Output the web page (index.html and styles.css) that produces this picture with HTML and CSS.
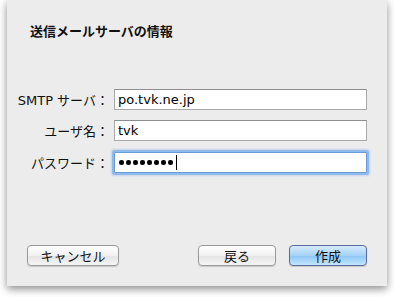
FILE: index.html
```html
<!DOCTYPE html>
<html lang="ja">
<head>
    <meta charset="UTF-8">
    <title>送信メールサーバの情報</title>
    <link rel="stylesheet" href="styles.css">
</head>
<body>
    <div class="sheet">
        <h1 class="title">送信メールサーバの情報</h1>
        <form class="fields">
            <div class="row">
                <label class="row-label">SMTP サーバ：</label>
                <input class="field" type="text" value="po.tvk.ne.jp">
            </div>
            <div class="row">
                <label class="row-label">ユーザ名：</label>
                <input class="field" type="text" value="tvk">
            </div>
            <div class="row">
                <label class="row-label">パスワード：</label>
                <div class="field focused">
                    <span class="dot"></span><span class="dot"></span><span class="dot"></span><span class="dot"></span>
                    <span class="dot"></span><span class="dot"></span><span class="dot"></span><span class="dot"></span>
                    <span class="caret"></span>
                </div>
            </div>
        </form>
        <div class="buttons">
            <button class="btn" type="button">キャンセル</button>
            <div class="spacer"></div>
            <button class="btn small" type="button">戻る</button>
            <button class="btn small primary" type="button">作成</button>
        </div>
    </div>
</body>
</html>
```

FILE: styles.css
```css
* {
    margin: 0;
    padding: 0;
    box-sizing: border-box;
    font-family: 'DejaVu Sans', 'Noto Sans CJK JP', sans-serif;
}

body {
    background-color: #fff;
    width: 394px;
    height: 297px;
    overflow: hidden;
    padding: 0 7px;
}

.sheet {
    width: 380px;
    height: 286px;
    background-color: #ececec;
    box-shadow: 0 3px 8px rgba(0, 0, 0, 0.45);
    padding: 22px 20px 0 10px;
    display: flex;
    flex-direction: column;
}

.title {
    font-size: 13px;
    font-weight: bold;
    color: #111;
    padding-left: 13px;
    line-height: 18px;
    font-family: 'Noto Sans CJK JP', sans-serif;
}

.fields {
    margin-top: 49px;
    display: flex;
    flex-direction: column;
    gap: 10px;
}

.row {
    display: flex;
    align-items: center;
}

.row-label {
    flex-shrink: 0;
    width: 92px;
    margin-right: 5px;
    text-align: right;
    white-space: nowrap;
    font-size: 13px;
    color: #111;
}

.field {
    width: 253px;
    height: 21px;
    border: 1px solid #a9a9a9;
    border-top-color: #8e8e8e;
    background-color: #fff;
    font-size: 13px;
    font-family: 'DejaVu Sans', sans-serif;
    padding: 0 3px;
    color: #000;
    outline: none;
}

.focused {
    display: flex;
    align-items: center;
    gap: 2.5px;
    padding: 0 4px;
    border-color: #6b9bd6;
    box-shadow: 0 0 0 2px #8ebbec, 0 0 2px 3px rgba(120, 170, 230, 0.35);
    border-radius: 1px;
    margin-top: 1px;
}

.dot {
    width: 4.5px;
    height: 4.5px;
    border-radius: 50%;
    background-color: #000;
}

.caret {
    width: 1px;
    height: 15px;
    margin-left: 1px;
    background-color: #000;
}

.buttons {
    margin-top: auto;
    margin-bottom: 20px;
    display: flex;
    align-items: center;
    padding-left: 10px;
}

.spacer {
    flex: 1;
}

.btn {
    height: 21px;
    border: 1px solid #9a9a9a;
    border-radius: 4px;
    background: linear-gradient(#ffffff, #f1f1f1 50%, #e4e4e4 51%, #f4f4f4);
    font-size: 13px;
    font-family: 'Noto Sans CJK JP', sans-serif;
    color: #111;
    width: 92px;
    box-shadow: 0 1px 1px rgba(0, 0, 0, 0.15);
}

.btn + .btn {
    margin-left: 13px;
}

.small {
    width: 78px;
}

.primary {
    border-color: #5a6a9c;
    background: linear-gradient(#d6ebfc, #a5d2f7 50%, #8cc6f6 51%, #c3e6fd);
}
```
